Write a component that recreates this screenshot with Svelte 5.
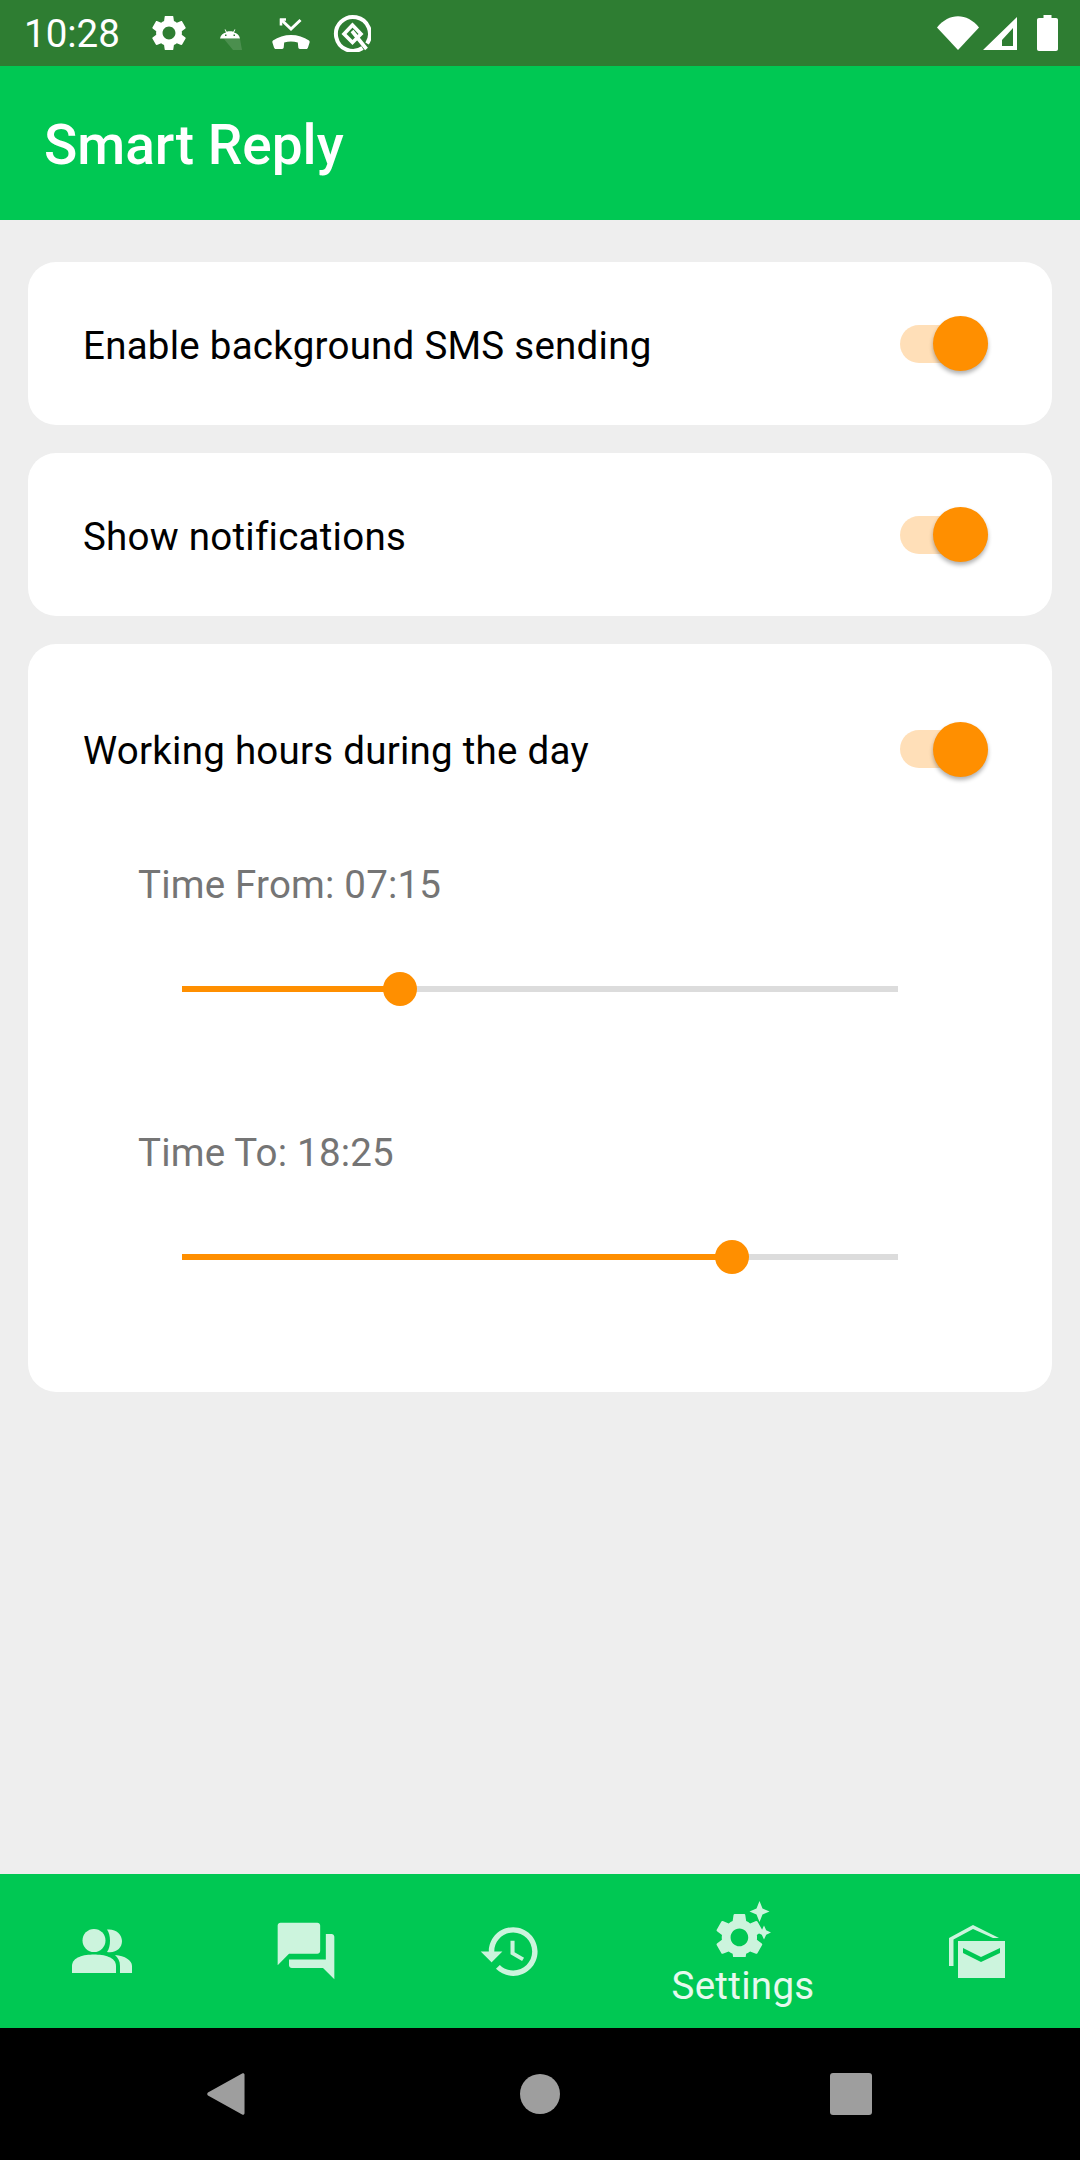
<script>
  let settings = [
    { label: "Enable background SMS sending" },
    { label: "Show notifications" },
  ];

  let sliders = [
    { label: "Time From: 07:15", value: 30.4 },
    { label: "Time To: 18:25", value: 76.8 },
  ];

  const gear =
    "M19.14 12.94c.04-.3.06-.61.06-.94 0-.32-.02-.64-.07-.94l2.03-1.58c.18-.14.23-.41.12-.61l-1.92-3.32c-.12-.22-.37-.29-.59-.22l-2.39.96c-.5-.38-1.03-.7-1.62-.94l-.36-2.54c-.04-.24-.24-.41-.48-.41h-3.84c-.24 0-.43.17-.47.41l-.36 2.54c-.59.24-1.13.57-1.62.94l-2.39-.96c-.22-.08-.47 0-.59.22L2.74 8.87c-.12.21-.08.47.12.61l2.03 1.58c-.05.3-.09.63-.09.94s.02.64.07.94l-2.03 1.58c-.18.14-.23.41-.12.61l1.92 3.32c.12.22.37.29.59.22l2.39-.96c.5.38 1.03.7 1.62.94l.36 2.54c.05.24.24.41.48.41h3.84c.24 0 .44-.17.47-.41l.36-2.54c.59-.24 1.13-.56 1.62-.94l2.39.96c.22.08.47 0 .59-.22l1.92-3.32c.12-.22.07-.47-.12-.61l-2.01-1.58zM12 15.6c-1.98 0-3.6-1.62-3.6-3.6s1.62-3.6 3.6-3.6 3.6 1.62 3.6 3.6-1.62 3.6-3.6 3.6z";
</script>

<div class="screen">
  <div class="status-bar">
    <span class="clock">10:28</span>
    <svg class="st-gear" viewBox="2.5 2.5 19 19" width="34" height="34"><path d={gear} fill="#fff" /></svg>
    <svg class="st-droid" viewBox="0 0 24 24" width="24" height="24">
      <path fill-rule="evenodd" d="M2 12.500c.6-3.400 3-5.400 6-6L6.600 3.600l.7-.4L8.800 5.700c2-.6 4.300-.6 6.400 0l1.500-2.500.7.4L16 6.500c3 .6 5.400 2.600 6 6zM7 8.500v1.500h1.500V8.500zM15.500 8.500v1.500H17V8.500z" fill="#fff" />
      <path d="M6 13h16l2 11H15z" fill="#fff" opacity=".14" />
    </svg>
    <svg class="st-call" viewBox="0 0 38 31" width="38" height="31">
      <path d="M9.500 2l9.500 9 9.500-9" fill="none" stroke="#fff" stroke-width="3" />
      <path d="M8 1.500h6M9 .5v7" fill="none" stroke="#fff" stroke-width="2.600" />
      <path d="M19 17c-6.500 0-13 2-18 5.500-.6.500-.8 1.200-.6 1.900L2 29.500c.2.900 1 1.500 1.800 1.500h6.400c.8 0 1.400-.6 1.500-1.400l.5-5.100c4.500-1.300 9-1.300 13.600 0l.5 5.100c.1.800.7 1.400 1.500 1.400h6.400c.9 0 1.600-.6 1.800-1.500l1.600-5.100c.2-.7 0-1.400-.6-1.900C32 19 25.500 17 19 17z" fill="#fff" />
    </svg>
    <svg class="st-q" viewBox="0 0 38 38" width="38" height="38">
      <path d="M29.500 34A17 17 0 1 1 34 29.500" fill="none" stroke="#fff" stroke-width="4" />
      <path d="M19.500 11l-8.500 9 8.500 8.500 8.500-8.500zM19 17l14.500 18" fill="none" stroke="#fff" stroke-width="3.600" />
    </svg>
    <span class="spacer"></span>
    <svg class="st-wifi" viewBox="0 0 42 34" width="42" height="34"><path d="M0 11.500C12-3.500 30-3.500 42 11.500L21 34z" fill="#fff" /></svg>
    <svg class="st-signal" viewBox="0 0 34 33" width="34" height="33">
      <path fill-rule="evenodd" d="M34 0v33H0zM30 11L19 23v6h11z" fill="#fff" />
    </svg>
    <svg class="st-battery" viewBox="0 0 21 36" width="21" height="36">
      <path d="M6.500 0h8v3H19c1.200 0 2 .8 2 2v29c0 1.200-.8 2-2 2H2c-1.200 0-2-.8-2-2V5c0-1.200.8-2 2-2h4.500z" fill="#fff" />
    </svg>
  </div>

  <header class="app-bar">Smart Reply</header>

  <main class="content">
    {#each settings as item}
      <section class="card row">
        <span class="row-label">{item.label}</span>
        <span class="switch"><span class="thumb"></span></span>
      </section>
    {/each}

    <section class="card hours">
      <div class="hours-head">
        <span class="row-label">Working hours during the day</span>
        <span class="switch"><span class="thumb"></span></span>
      </div>
      {#each sliders as slider}
        <div class="slider-block">
          <div class="slider-label">{slider.label}</div>
          <div class="slider">
            <div class="slider-fill" style="width: {slider.value}%"></div>
            <div class="slider-thumb" style="left: {slider.value}%"></div>
          </div>
        </div>
      {/each}
    </section>
  </main>

  <nav class="bottom-nav">
    <div class="nav-item">
      <svg viewBox="0 0 60 44" width="60" height="44">
        <circle cx="22" cy="11.500" r="11.500" />
        <path d="M35 .5c9-1 15 5 15 11.500 0 7-6 12.500-15 11 4-5 4-17.500 0-22.500z" />
        <path d="M0 44v-7c0-9 12-11.500 22-11.500S44 28 44 37v7z" />
        <path d="M43 26c10 1 17 5 17 11v7H48v-7c0-5-2-8-5-11z" />
      </svg>
    </div>
    <div class="nav-item">
      <svg viewBox="0 0 24 24" width="68" height="68">
        <path d="M21 6h-2v9H6v2c0 .55.45 1 1 1h11l4 4V7c0-.55-.45-1-1-1zm-4 6V3c0-.55-.45-1-1-1H3c-.55 0-1 .45-1 1v14l4-4h10c.55 0 1-.45 1-1z" />
      </svg>
    </div>
    <div class="nav-item">
      <svg viewBox="0 0 24 24" width="65" height="65">
        <path d="M13 3c-4.970 0-9 4.030-9 9H1l3.890 3.890.07.14L9 12H6c0-3.870 3.130-7 7-7s7 3.130 7 7-3.130 7-7 7c-1.930 0-3.680-.79-4.940-2.060l-1.420 1.420C8.270 19.990 10.510 21 13 21c4.970 0 9-4.030 9-9s-4.030-9-9-9zm-1 5v5l4.280 2.540.72-1.210-3.500-2.080V8H12z" />
      </svg>
    </div>
    <div class="nav-item active">
      <svg viewBox="0 0 60 56" width="60" height="56">
        <g transform="translate(-3 7) scale(2.450)"><path fill-rule="evenodd" d={gear} /></g>
        <path d="M46.500 0l3 7.500 7 3-7 3-3 7.500-3-7.500-7-3 7-3z" />
        <path d="M51 24.500l2.200 4.800 4.800 2.200-4.800 2.200-2.200 4.800-2.200-4.800-4.800-2.200 4.800-2.200z" />
      </svg>
      <span class="nav-label">Settings</span>
    </div>
    <div class="nav-item">
      <svg viewBox="0 0 56 53" width="56" height="53">
        <path fill-rule="evenodd" d="M0 41V13L24 0l26 13H44L24 4 4.500 14.500V41z" />
        <path fill-rule="evenodd" d="M9 16h47v37H9zM14 23v5l18 9 19-9v-5l-19 9z" />
      </svg>
    </div>
  </nav>

  <div class="system-nav">
    <svg viewBox="0 0 40 46" width="38" height="44"><path d="M37 1.500c1-.8 2.500-.2 2.500 1.200v40.600c0 1.400-1.500 2-2.500 1.200L1 24.500c-1-.8-1-2.200 0-3z" /></svg>
    <svg viewBox="0 0 40 40" width="40" height="40"><circle cx="20" cy="20" r="20" /></svg>
    <svg viewBox="0 0 42 42" width="42" height="42"><rect width="42" height="42" rx="3" /></svg>
  </div>
</div>

<style>
  :global(body) {
    font-family: Roboto, "Noto Sans", sans-serif;
  }

  .screen {
    width: 1080px;
    height: 2160px;
    display: flex;
    flex-direction: column;
    background: #eeeeee;
    overflow: hidden;
  }

  .status-bar {
    height: 66px;
    flex: none;
    display: flex;
    align-items: center;
    padding: 0 22px 0 24px;
    background: #2e7d32;
    color: #fff;
  }

  .clock {
    font-size: 38.500px;
    width: 95px;
  }

  .st-gear {
    margin-left: 33px;
  }

  .st-droid {
    margin-left: 32px;
    margin-top: 10px;
  }

  .st-call {
    margin-left: 30px;
  }

  .st-q {
    margin-left: 23px;
  }

  .spacer {
    flex: 1;
  }

  .st-signal {
    margin-left: 4px;
  }

  .st-battery {
    margin-left: 20px;
  }

  .app-bar {
    height: 154px;
    flex: none;
    display: flex;
    align-items: center;
    padding-left: 44px;
    box-sizing: border-box;
    background: #00c853;
    color: #fff;
    font-size: 55px;
    font-weight: 500;
    padding-top: 3px;
  }

  .content {
    flex: 1;
    display: flex;
    flex-direction: column;
    gap: 28px;
    padding: 42px 28px 0;
  }

  .card {
    background: #fff;
    border-radius: 28px;
  }

  .row {
    height: 163px;
    display: flex;
    align-items: center;
    justify-content: space-between;
    padding: 0 64px 0 55px;
  }

  .row-label {
    font-size: 38.500px;
    letter-spacing: 0.25px;
    color: #000;
    margin-top: 3px;
  }

  .switch {
    position: relative;
    width: 88px;
    height: 38px;
    border-radius: 19px;
    background: #ffdfb8;
  }

  .thumb {
    position: absolute;
    right: 0;
    top: -8.500px;
    width: 55px;
    height: 55px;
    border-radius: 50%;
    background: #ff8f00;
    box-shadow: 0 3px 4px rgba(0, 0, 0, 0.3);
  }

  .hours {
    height: 748px;
    box-sizing: border-box;
    padding: 27px 64px 0 55px;
  }

  .hours-head {
    height: 156px;
    display: flex;
    align-items: center;
    justify-content: space-between;
  }

  .slider-block {
    padding-left: 55px;
    height: 268px;
    padding-top: 34px;
    box-sizing: border-box;
  }

  .slider-label {
    font-size: 38.500px;
    letter-spacing: 0.2px;
    line-height: 48px;
    color: #757575;
  }

  .slider {
    position: relative;
    width: 716px;
    height: 6px;
    margin-top: 77px;
    margin-left: 44px;
    background: #dcdcdc;
  }

  .slider-fill {
    height: 100%;
    background: #ff8f00;
  }

  .slider-thumb {
    position: absolute;
    top: -14px;
    width: 34px;
    height: 34px;
    margin-left: -17px;
    border-radius: 50%;
    background: #ff8f00;
  }

  .bottom-nav {
    height: 154px;
    flex: none;
    display: grid;
    grid-template-columns: 204px 204px 204px 262px 206px;
    background: #00c853;
  }

  .nav-item {
    display: flex;
    flex-direction: column;
    align-items: center;
    justify-content: center;
    fill: #ccf4dd;
  }

  .nav-item.active {
    justify-content: flex-start;
    padding-top: 27px;
  }

  .nav-label {
    font-size: 38.500px;
    letter-spacing: 0.3px;
    line-height: 44px;
    color: #e6f9ee;
    margin-top: 7px;
  }

  .system-nav {
    height: 132px;
    flex: none;
    display: grid;
    grid-template-columns: 314px 314px 308px;
    align-items: center;
    justify-items: center;
    padding-left: 69px;
    background: #000;
    fill: #9e9e9e;
  }
</style>
